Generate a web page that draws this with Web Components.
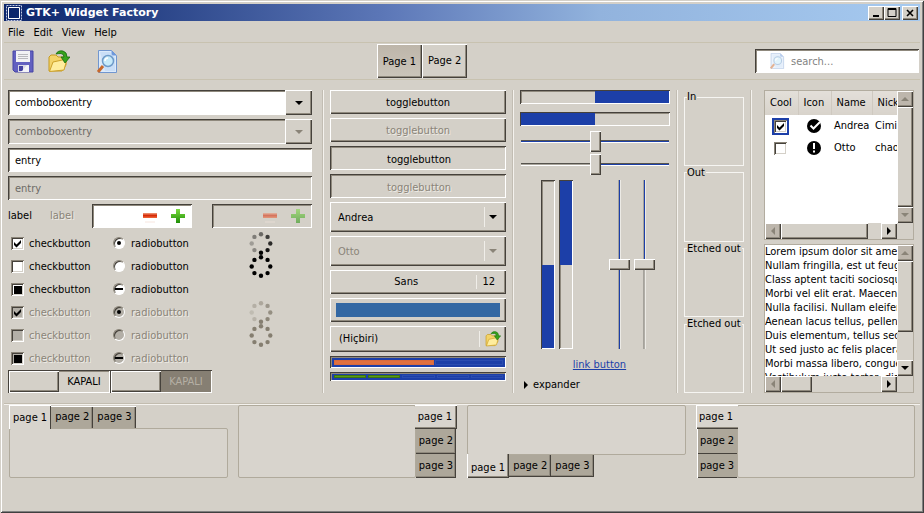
<!DOCTYPE html>
<html lang="tr">
<head>
<meta charset="utf-8">
<title>GTK+ Widget Factory</title>
<style>
    html, body {
        margin: 0;
        background: #d4d0c8;
    }

    body {
        --bg: #d4d0c8;
        --dark: #45413b;
        --shade: #8f897d;
        --blue: #1c3fa8;
        --off: #8a8478;
        --raised: inset 1px 1px #fff, inset -1px -1px #45413b, inset -2px -2px #8f897d;
        --sunken: inset 1px 1px #45413b, inset -1px -1px #fff, inset 2px 2px #8f897d;
        font: 11px/14px Tahoma, "DejaVu Sans Condensed", "DejaVu Sans", sans-serif;
        color: #000;
    }
</style>
</head>
<body>
<gtk-window>
    <gtk-titlebar slot="title">GTK+ Widget Factory</gtk-titlebar>
    <gtk-menubar slot="menu" items="File,Edit,View,Help"></gtk-menubar>
    <gtk-toolbar slot="toolbar"></gtk-toolbar>
    <factory-page></factory-page>
    <gtk-notebook slot="books" side="top"></gtk-notebook>
    <gtk-notebook slot="books" side="right"></gtk-notebook>
    <gtk-notebook slot="books" side="bottom"></gtk-notebook>
    <gtk-notebook slot="books" side="left"></gtk-notebook>
</gtk-window>

<script>
const base = `
    * { box-sizing: border-box; }
    :host { display: block; min-width: 0; box-sizing: border-box; }
    button, input, textarea, select { font: inherit; color: inherit; margin: 0; border: 0; border-radius: 0; padding: 0; background: none; outline: 0; appearance: none; }
    .raised { background: var(--bg); box-shadow: var(--raised); }
    .sunken { background: var(--bg); box-shadow: var(--sunken); }
    .off { color: var(--off); text-shadow: 1px 1px #eeebe5; }
    svg { display: block; flex: none; }
`;

const icons = {
    save: `<svg width="22" height="23" viewBox="0 0 22 23"><path d="M1 1h20v21H3l-2-2z" fill="#6260c0" stroke="#4745a5"/><path d="M4 1h14v11H4z" fill="#f2f2f4"/><path d="M6 4.500h10M6 6.500h10M6 8.500h10" stroke="#b9b9bd"/><path d="M6 15h11v7H6z" fill="#d8d8e6"/><path d="M7 16h4v5H7z" fill="#4341a0"/><path d="M9 22l6-7h2v7z" fill="#fff" opacity=".7"/></svg>`,
    open: `<svg width="22" height="23" viewBox="0 0 22 23"><path d="M1 21V7l2-2h5l2 2h7v4h1v4l-4 6z" fill="#f3d368" stroke="#c59a20"/><path d="M1.500 21.500L5 12l14-3-3 11z" fill="#ffed9d" stroke="#cda22b"/><path d="M8 4q2-4 7-3 4 1 4 6h3l-5 6-4-6h3q0-3-3-3.500-3 0-5 .5z" fill="#36a41c" stroke="#16690d" stroke-width=".8"/></svg>`,
    find: `<svg width="22" height="23" viewBox="0 0 22 23"><path d="M2.500.5h13l5 5v17h-18z" fill="#dceafa" stroke="#7196cf"/><path d="M15.500.5l5 5h-5z" fill="#6d98dc"/><path d="M4 2h10l5 6v13H9z" fill="#bcd5f5" opacity=".6"/><path d="M7 16l-5 6" stroke="#c8682b" stroke-width="3"/><circle cx="12" cy="11" r="5.500" fill="#c7eafa" stroke="#6f9bc9" stroke-width="1.500"/><path d="M9 11q0-3 3-3" stroke="#fff" stroke-width="1.500" fill="none"/></svg>`,
    down: `<svg width="8" height="4" viewBox="0 0 8 4" fill="currentColor"><path d="M0 0h8L4 4z"/></svg>`,
    up: `<svg width="8" height="4" viewBox="0 0 8 4" fill="currentColor"><path d="M0 4h8L4 0z"/></svg>`,
    left: `<svg width="4" height="8" viewBox="0 0 4 8" fill="currentColor"><path d="M4 0v8L0 4z"/></svg>`,
    right: `<svg width="4" height="8" viewBox="0 0 4 8" fill="currentColor"><path d="M0 0v8l4-4z"/></svg>`,
    minus: `<svg width="16" height="16" viewBox="0 0 16 16"><defs><linearGradient id="r" x2="0" y2="1"><stop stop-color="#f0a080"/><stop offset=".5" stop-color="#d62a08"/><stop offset="1" stop-color="#f06a3c"/></linearGradient></defs><path d="M1 5h14v5H1z" fill="url(#r)"/><path d="M3 14h10" stroke="#f7e6df"/></svg>`,
    plus: `<svg width="16" height="16" viewBox="0 0 16 16"><defs><linearGradient id="g" x2="0" y2="1"><stop stop-color="#7ddc3f"/><stop offset="1" stop-color="#1f8f08"/></linearGradient></defs><path d="M6 1h4v5h5v4h-5v5H6v-5H1V6h5z" fill="url(#g)"/></svg>`,
    ok: `<svg width="14" height="14" viewBox="0 0 14 14"><circle cx="7" cy="7" r="7"/><path d="M3.500 6.500L6.500 9.500 13 3" stroke="#fff" stroke-width="2" fill="none"/></svg>`,
    warn: `<svg width="14" height="14" viewBox="0 0 14 14"><circle cx="7" cy="7" r="7"/><path d="M6 2h2v6H6zM6 9.500h2v2H6z" fill="#fff"/></svg>`,
};

class GtkElement extends HTMLElement {
    connectedCallback() {
        if (this.shadowRoot) return;
        const root = this.attachShadow({ mode: 'open' });
        const template = document.createElement('template');
        template.innerHTML = `<style>${base}${this.styles()}</style>${this.markup()}`;
        root.appendChild(template.content.cloneNode(true));
    }

    attr(name, fallback = '') {
        return this.getAttribute(name) || fallback;
    }

    // attribute string for the inner control
    get disabled() {
        return this.hasAttribute('disabled') ? 'disabled' : '';
    }

    styles() { return ''; }

    markup() { return '<slot></slot>'; }
}

class GtkWindow extends GtkElement {
    styles() {
        return `
            :host { display: flex; flex-direction: column; min-height: 100vh; padding: 4px; background: var(--bg);
                box-shadow: inset 1px 1px var(--bg), inset -1px -1px #404040, inset 2px 2px #fff, inset -2px -2px #808080; }
            .books { display: grid; grid-template-columns: repeat(4, minmax(0, 1fr)); gap: 10px; padding: 0 5px; border-top: 1px solid #f4f2ee; }
            .line { border-top: 1px solid #c2bcaf; margin-top: 10px; }
        `;
    }

    markup() {
        return `
            <slot name="title"></slot><slot name="menu"></slot><slot name="toolbar"></slot>
            <slot></slot><div class="line"></div><div class="books"><slot name="books"></slot></div>
        `;
    }
}

class GtkTitlebar extends GtkElement {
    styles() {
        return `
            :host { display: flex; align-items: center; height: 17px; padding: 0 2px; background: linear-gradient(90deg, #0a246a, #5d78b8 42%, #92b3dd 65%, #a6caf0); color: #fff; font-weight: bold; font-family: Verdana, "DejaVu Sans", sans-serif; }
            .title { flex: 1; padding-left: 4px; }
            button { width: 16px; height: 14px; display: grid; place-items: center; color: #000; }
            button:last-child { margin-left: 2px; }
        `;
    }

    markup() {
        return `
            <svg width="16" height="16" viewBox="0 0 16 16" fill="none"><path d="M.5.500h15v15H.5z" stroke="#c5cde6" stroke-dasharray="2 1"/><path d="M2.500 2.500h11v11h-11z" stroke="#fff"/></svg>
            <span class="title"><slot></slot></span>
            <button class="raised" aria-label="Minimize"><svg width="10" height="9"><path d="M2 7h6v2H2z"/></svg></button>
            <button class="raised" aria-label="Maximize"><svg width="10" height="9"><path d="M1 .500h8v8H1zM1 1.500h8" fill="none" stroke="#000"/></svg></button>
            <button class="raised" aria-label="Close"><svg width="8" height="8"><path d="M1 1l6 6M7 1L1 7" stroke="#000" stroke-width="1.600"/></svg></button>
        `;
    }
}

class GtkMenubar extends GtkElement {
    styles() {
        return `
            :host { display: flex; gap: 9px; padding: 5px 4px 2px; border-bottom: 1px solid #c8c2b0; }
        `;
    }

    markup() {
        return this.attr('items').split(',').map((item) => `<button>${item}</button>`).join('');
    }
}

class GtkToolbar extends GtkElement {
    styles() {
        return `
            :host { display: grid; grid-template-columns: 373fr auto 453fr; align-items: center; height: 37px; border-bottom: 1px solid #c8c2b0; }
            .tools { display: flex; gap: 14px; padding-left: 8px; }
            .tools button:last-child { margin-left: 12px; }
            .pages { display: flex; }
            .pages button { height: 34px; padding: 0 6px; }
            .pages .active { background: linear-gradient(#bdb5a9, #cbc5ba); padding-top: 2px; }
            .search { justify-self: end; display: flex; align-items: center; gap: 6px; width: 164px; height: 24px; padding-left: 14px; background: #fff; margin-right: 1px; }
            .search input { flex: 1; min-width: 0; padding-top: 2px; }
            .search svg { width: 16px; height: 16px; opacity: .5; }
            ::placeholder { color: #828282; }
        `;
    }

    markup() {
        return `
            <div class="tools">
                <button aria-label="Save">${icons.save}</button>
                <button aria-label="Open">${icons.open}</button>
                <button aria-label="Find">${icons.find}</button>
            </div>
            <div class="pages"><button class="raised active">Page 1</button><button class="raised">Page 2</button></div>
            <label class="search sunken">${icons.find}<input type="text" aria-label="Search" placeholder="search..."></label>
        `;
    }
}

class GtkEntry extends GtkElement {
    styles() {
        return `
            .box { display: flex; min-height: 24px; background: #fff; }
            :host([combo]) .box { min-height: 25px; }
            :host([disabled]) .box { background: var(--bg); }
            input { flex: 1; min-width: 0; padding: 1px 0 0 7px; }
            input:disabled { color: #6c6a66; }
            button { width: 27px; display: grid; place-items: center; }
            button:disabled { color: var(--off); }
        `;
    }

    markup() {
        const arrow = this.hasAttribute('combo')
            ? `<button class="raised" aria-label="Open list" ${this.disabled}>${icons.down}</button>` : '';
        return `<div class="box sunken"><input type="text" aria-label="${this.attr('value')}" value="${this.attr('value')}" ${this.disabled}>${arrow}</div>`;
    }
}

class GtkSpin extends GtkElement {
    styles() {
        return `
            .box { display: flex; align-items: center; gap: 12px; height: 24px; padding: 0 6px; background: #fff; }
            :host([disabled]) .box { background: var(--bg); }
            input { flex: 1; min-width: 0; }
            :host([disabled]) svg { opacity: .55; }
        `;
    }

    markup() {
        return `
            <div class="box sunken">
                <input type="text" aria-label="Value" ${this.disabled}>
                <button aria-label="Decrease" ${this.disabled}>${icons.minus}</button>
                <button aria-label="Increase" ${this.disabled}>${icons.plus}</button>
            </div>
        `;
    }
}

// checkbutton and radiobutton; state is on, off or mixed
class GtkCheck extends GtkElement {
    styles() {
        return `
            label { display: flex; align-items: center; gap: 5px; height: 23px; }
            .mark { display: grid; width: 13px; height: 13px; flex: none; }
            .mark > * { grid-area: 1 / 1; }
            input { width: 13px; height: 13px; background: #fff; box-shadow: inset 1px 1px var(--off), inset -1px -1px #fff, inset 2px 2px var(--dark), inset -2px -2px var(--bg); }
            input:disabled { background: #b3afa7; }
            input[type=radio] { border-radius: 50%; width: 12px; height: 12px; border: 1px solid; border-color: var(--off) #fff #fff var(--off); box-shadow: inset 1px 1px var(--dark); }
            svg { pointer-events: none; position: relative; }
            :host([bare]) label { height: auto; }
        `;
    }

    markup() {
        const type = this.attr('type', 'checkbox');
        const state = this.attr('state', 'off');
        const marks = {
            'checkbox-on': '<path d="M3 5v3l2.500 2.500L10 6V3L5.500 7.500z"/>',
            'checkbox-mixed': '<path d="M3 3h8v8H3z"/>',
            'radio-on': '<circle cx="6" cy="6" r="2"/>',
            'radio-mixed': '<path d="M2 5h8v2H2z"/>',
        };
        const bare = this.hasAttribute('bare');
        const text = bare ? '' : `<span class="${this.disabled ? 'off' : ''}"><slot></slot></span>`;
        return `
            <label>
                <span class="mark">
                    <input type="${type}" ${bare ? 'aria-label="Cool"' : ''} ${state === 'on' ? 'checked' : ''} ${this.disabled}>
                    <svg width="13" height="13" viewBox="0 0 13 13">${marks[`${type}-${state}`] || ''}</svg>
                </span>${text}
            </label>
        `;
    }
}

class GtkSpinner extends GtkElement {
    markup() {
        const shades = this.hasAttribute('idle') ? [1, 1, 1, 1, 1, 1, 1, 1] : [0.5, 0.7, 0.8, 0.9, 1, 0.35, 0.25, 0.4];
        const fill = this.hasAttribute('disabled') ? '#857e70' : '#000';
        const dots = shades.map((opacity, i) => {
            const angle = i * Math.PI / 4;
            return `<circle cx="${12 + 9.3 * Math.sin(angle)}" cy="${11.5 - 9.3 * Math.cos(angle)}" r="2.200" fill="${fill}" opacity="${opacity}"/>`;
        });
        return `<svg width="24" height="23" role="img" aria-label="Spinner">${dots.join('')}</svg>`;
    }
}

class GtkSwitch extends GtkElement {
    styles() {
        return `
            button { display: grid; grid-template-columns: 1fr 1fr; width: 102px; height: 23px; padding: 1px; }
            .text { display: grid; place-items: center; }
            button:disabled .text { background: #867f73; color: #b5afa4; }
        `;
    }

    markup() {
        return `<button class="sunken" role="switch" aria-checked="false" ${this.disabled}><span class="raised"></span><span class="text"><slot></slot></span></button>`;
    }
}

class GtkButton extends GtkElement {
    styles() {
        return `
            button { display: block; width: 100%; min-height: 24px; padding-top: 2px; }
            button.sunken { padding: 4px 0 0 2px; }
        `;
    }

    markup() {
        const look = this.hasAttribute('pressed') ? 'sunken' : 'raised';
        return `<button class="${look} ${this.disabled && 'off'}" aria-pressed="${look === 'sunken'}" ${this.disabled}><slot></slot></button>`;
    }
}

class GtkCombo extends GtkElement {
    styles() {
        return `
            .box { display: grid; align-items: center; height: 30px; }
            .box > * { grid-area: 1 / 1; }
            select { width: 100%; height: 100%; padding: 2px 0 0 8px; opacity: 1; }
            .arrow { justify-self: end; display: flex; align-items: center; gap: 4px; padding-right: 9px; pointer-events: none; }
            .arrow::before { content: ""; height: 20px; border-left: 1px solid #f0eee9; }
        `;
    }

    markup() {
        const text = this.attr('value');
        return `<div class="box raised ${this.disabled && 'off'}"><select aria-label="${text}" ${this.disabled}><option>${text}</option></select><span class="arrow">${icons.down}</span></div>`;
    }
}

// font, colour and file choosers
class GtkChooser extends GtkElement {
    styles() {
        return `
            button { display: flex; align-items: center; width: 100%; min-height: 24px; padding: 0 6px; }
            .name { flex: 1; }
            .extra { padding: 0 5px; border-left: 1px solid #f0eee9; }
            .color { flex: 1; height: 14px; background: #3468a3; }
            :host([kind=file]) button { min-height: 26px; padding: 0 5px 0 9px; }
            :host([kind=file]) .name { text-align: left; }
            :host([kind=file]) .extra { padding: 0 0 0 5px; }
            svg { width: 16px; height: 16px; }
        `;
    }

    markup() {
        const kind = this.attr('kind');
        if (kind === 'color') return '<button class="raised" aria-label="Choose color"><span class="color"></span></button>';
        const extra = kind === 'file' ? icons.open : this.attr('size');
        return `<button class="raised"><span class="name"><slot></slot></span><span class="extra">${extra}</span></button>`;
    }
}

class GtkLevel extends GtkElement {
    styles() {
        return `
            .level { display: flex; gap: 1px; height: 12px; padding: 4px 3px 3px 4px; background: var(--blue); }
            :host([discrete]) .level { height: 9px; gap: 2px; padding: 3px 3px 3px 4px; }
            i { flex: 1; border: 1px solid #2a4cb0; }
            .bar { flex: 3; background: #e0703f; border-color: #d86a3c; }
            .rest { flex: 2; }
            .full { background: #5a9c12; border-color: #3c7410; }
        `;
    }

    markup() {
        const cells = this.hasAttribute('discrete')
            ? '<i class="full"></i><i class="full"></i><i></i><i></i><i></i>'
            : '<i class="bar"></i><i class="rest"></i>';
        return `<div class="sunken level" role="meter" aria-label="Level" aria-valuenow="3">${cells}</div>`;
    }
}

class GtkProgress extends GtkElement {
    styles() {
        return `
            .bar { display: flex; height: 14px; padding: 1px; }
            .bar::before { content: ""; width: 50%; background: var(--blue); }
            :host([end]) .bar { justify-content: flex-end; }
            :host([vertical]) .bar { flex-direction: column; width: 14px; height: 100%; }
            :host([vertical]) .bar::before { width: auto; height: 50%; }
        `;
    }

    markup() {
        return '<div class="bar sunken" role="progressbar" aria-label="Progress" aria-valuenow="50"></div>';
    }
}

class GtkScale extends GtkElement {
    styles() {
        return `
            input { display: block; width: 100%; height: 21px; padding: 0 1px; }
            input::-webkit-slider-runnable-track { height: 3px; background: linear-gradient(90deg, var(--from, var(--blue)) 50%, var(--blue) 50%); border-top: 1px solid #56534d; border-bottom: 1px solid #fff; }
            input::-webkit-slider-thumb { appearance: none; width: 11px; height: 21px; margin-top: -10px; background: var(--bg); box-shadow: var(--raised); }
            :host([from]) { --from: #aaa69d; }
            :host([vertical]) input { writing-mode: vertical-lr; width: 21px; height: 100%; padding: 0; }
            :host([vertical]) input::-webkit-slider-runnable-track { width: 3px; height: auto; border: 0; border-left: 1px solid #a5a29b; border-right: 1px solid #eceae5; background: linear-gradient(var(--blue) 50%, var(--to, var(--blue)) 50%); }
            :host([vertical]) input::-webkit-slider-thumb { width: 21px; height: 11px; margin: 0 0 0 -10px; }
            :host([to]) { --to: #b0ada6; }
        `;
    }

    markup() {
        return '<input type="range" aria-label="Scale" value="50">';
    }
}

class GtkFrame extends GtkElement {
    styles() {
        return `
            fieldset { height: 100%; margin: 0; padding: 0; border: 1px solid #f6f5f2; min-width: 0; }
            legend { margin-left: 2px; padding: 0 1px 0 0; white-space: nowrap; }
        `;
    }

    markup() {
        return '<fieldset><legend><slot></slot></legend></fieldset>';
    }
}

class GtkScrolled extends GtkElement {
    styles() {
        return `
            :host { border: 1px solid #b2ac9f; display: grid; grid-template: minmax(0, 1fr) 16px / minmax(0, 1fr) 16px; background: var(--bg); min-height: 0; }
            .view { background: #fff; overflow: hidden; min-height: 0; display: grid; }
            .bar, .track { display: flex; min-height: 0; }
            .v, .v .track { flex-direction: column; }
            .track { flex: 1; background: #d6d2ca; }
            button { flex: 0 0 16px; display: grid; place-items: center; }
            button:disabled { color: #8a8478; background: #bdb6ac; }
            .thumb { flex: 0 0 var(--size); }
        `;
    }

    markup() {
        const [v, h] = [this.attr('v'), this.attr('h')];
        const end = v === '100%' ? 'disabled' : '';
        return `
            <div class="view"><slot></slot></div>
            <div class="bar v">
                <button class="raised" aria-label="Up" disabled>${icons.up}</button>
                <div class="track"><span class="thumb raised" style="--size: ${v}"></span></div>
                <button class="raised" aria-label="Down" ${end}>${icons.down}</button>
            </div>
            <div class="bar">
                <button class="raised" aria-label="Left" disabled>${icons.left}</button>
                <div class="track"><span class="thumb raised" style="--size: ${h}"></span></div>
                <button class="raised" aria-label="Right">${icons.right}</button>
            </div>
        `;
    }
}

class GtkTree extends GtkElement {
    styles() {
        return `
            :host { overflow: hidden; }
            table { table-layout: fixed; width: 172px; border-collapse: collapse; }
            th { height: 24px; padding: 0 0 0 5px; text-align: left; font-weight: normal; background: linear-gradient(#e3dfd9, #d8d3cb); border-right: 1px solid #cfc9c0; }
            td { height: 22px; padding: 0 0 0 3px; }
            td:first-child { padding-left: 7px; }
            td:nth-child(2) { padding-left: 9px; }
            .mark { display: inline-block; vertical-align: middle; border: 2px solid #fff; }
            .focus { border-color: var(--blue); }
            .cool, .icon { width: 33px; }
            .name { width: 41px; }
        `;
    }

    markup() {
        return `
            <table>
                <thead><tr><th class="cool">Cool</th><th class="icon">Icon</th><th class="name">Name</th><th>Nick</th></tr></thead>
                <tbody>
                    <tr><td><gtk-check class="mark focus" bare state="on"></gtk-check></td><td>${icons.ok}</td><td>Andrea</td><td>Cimi</td></tr>
                    <tr><td><gtk-check class="mark" bare></gtk-check></td><td>${icons.warn}</td><td>Otto</td><td>chaotic</td></tr>
                </tbody>
            </table>
        `;
    }
}

class GtkTextview extends GtkElement {
    styles() {
        return `
            :host { display: grid; min-height: 0; }
            textarea { width: 100%; height: 100%; min-height: 0; resize: none; overflow: hidden; white-space: pre; display: block; }
        `;
    }

    markup() {
        return `<textarea aria-label="Text" wrap="off">Lorem ipsum dolor sit amet,
Nullam fringilla, est ut feugiat
Class aptent taciti sociosqu
Morbi vel elit erat. Maecenas
Nulla facilisi. Nullam eleifend
Aenean lacus tellus, pellentesque
Duis elementum, tellus sed tristique
Ut sed justo ac felis placerat
Morbi massa libero, congue
Vestibulum justo tortor, diam</textarea>`;
    }
}

class GtkNotebook extends GtkElement {
    styles() {
        return `
            :host { display: flex; height: 73px; }
            :host([side=top]) { flex-direction: column; }
            :host([side=right]) { flex-direction: row-reverse; }
            :host([side=bottom]) { flex-direction: column-reverse; }
            .pane { flex: 1; background: #d8d4cd; border: 1px solid #b0aa9c; border-radius: 2px; }
            .tabs { display: flex; flex: none; }
            button { height: 22px; padding: 0 4px; background: #ada79a; white-space: nowrap; }
            button:first-child { background: #d8d4cd; position: relative; }
            :host([side=top]) .tabs { align-items: flex-end; }
            :host([side=top]) button { box-shadow: inset 0 1px #fff, inset -1px 0 var(--dark), inset -2px 0 var(--shade); }
            :host([side=top]) button:first-child { height: 24px; padding-top: 2px; margin-bottom: -1px; box-shadow: inset 1px 1px #fff, inset -1px 0 var(--dark); }
            :host([side=bottom]) .tabs { align-items: flex-start; }
            :host([side=bottom]) button { box-shadow: inset -1px -1px var(--dark), inset -2px -2px var(--shade); }
            :host([side=bottom]) button:first-child { height: 24px; padding-top: 3px; margin-top: -1px; box-shadow: inset 1px 0 #fff, inset -1px -1px var(--dark), inset -2px -2px var(--shade); }
            :host([side=left]) .tabs, :host([side=right]) .tabs { flex-direction: column; }
            :host([side=left]) button, :host([side=right]) button { flex: 1; padding: 0 3px; }
            :host([side=left]) button { box-shadow: inset 1px 0 #fff, inset 0 -1px var(--dark); margin-left: 1px; }
            :host([side=left]) button:first-child { margin: 0 -1px 0 0; padding-right: 5px; box-shadow: inset 1px 1px #fff, inset 0 -1px var(--dark), inset 0 -2px var(--shade); }
            :host([side=right]) button { box-shadow: inset -1px -1px var(--dark), inset -2px -2px var(--shade); margin-right: 1px; }
            :host([side=right]) button:first-child { margin: 0 0 0 -1px; padding-right: 5px; box-shadow: inset 0 1px #fff, inset -1px -1px var(--dark), inset -2px -2px var(--shade); }
        `;
    }

    markup() {
        return '<div class="tabs"><button>page 1</button><button>page 2</button><button>page 3</button></div><div class="pane"></div>';
    }
}

class FactoryPage extends GtkElement {
    styles() {
        return `
            :host { display: grid; grid-template-columns: minmax(0, 308fr) 2px minmax(0, 176fr) 2px minmax(0, 150fr) 2px minmax(0, 60fr) 2px minmax(0, 156fr); gap: 6px; padding: 10px 6px 0 4px; }
            .sep { border-left: 1px solid #c2bdb3; border-right: 1px solid #f4f2ee; }
            .col { display: flex; flex-direction: column; gap: 4px; }
            .first { padding-right: 4px; }
            .spins { display: flex; align-items: center; justify-content: space-between; }
            .spins span { width: 22px; }
            .spins gtk-spin { width: 100px; }
            .checks { display: grid; grid-template-columns: 102px 1fr 63px; padding-left: 3px; }
            .switches { display: flex; }
            .meters { display: flex; flex-direction: column; gap: 8px; padding-bottom: 1px; }
            .scales { display: flex; flex-direction: column; gap: 2px; }
            .bars { display: flex; justify-content: center; gap: 4px; height: 169px; margin-top: 1px; padding-left: 6px; }
            .bars :nth-child(3) { margin-left: 32px; }
            a { align-self: center; color: var(--blue); margin: 5px 0 2px; padding-left: 9px; }
            .expander { display: flex; align-items: center; gap: 5px; padding-left: 4px; }
            .frames { display: grid; grid-auto-rows: 1fr; }
            .views { display: grid; grid-auto-rows: minmax(0, 1fr); gap: 4px; padding-left: 6px; height: 303px; }
        `;
    }

    markup() {
        const states = ['on', 'off', 'mixed'];
        const rows = ['', 'disabled'].map((disabled) => `
            <div class="checks">
                <div>${states.map((s) => `<gtk-check state="${s}" ${disabled}>checkbutton</gtk-check>`).join('')}</div>
                <div>${states.map((s) => `<gtk-check type="radio" state="${s}" ${disabled}>radiobutton</gtk-check>`).join('')}</div>
                <div><gtk-spinner ${disabled}></gtk-spinner><gtk-spinner idle ${disabled}></gtk-spinner></div>
            </div>
        `).join('');
        return `
            <div class="col first">
                <gtk-entry combo value="comboboxentry"></gtk-entry>
                <gtk-entry combo disabled value="comboboxentry"></gtk-entry>
                <gtk-entry value="entry"></gtk-entry>
                <gtk-entry disabled value="entry"></gtk-entry>
                <div class="spins"><span>label</span><span class="off">label</span><gtk-spin></gtk-spin><gtk-spin disabled></gtk-spin></div>
                <div>${rows}<div class="switches"><gtk-switch>KAPALI</gtk-switch><gtk-switch disabled>KAPALI</gtk-switch></div></div>
            </div>
            <div class="sep"></div>
            <div class="col">
                <gtk-button>togglebutton</gtk-button>
                <gtk-button disabled>togglebutton</gtk-button>
                <gtk-button pressed>togglebutton</gtk-button>
                <gtk-button pressed disabled>togglebutton</gtk-button>
                <gtk-combo value="Andrea"></gtk-combo>
                <gtk-combo value="Otto" disabled></gtk-combo>
                <gtk-chooser kind="font" size="12">Sans</gtk-chooser>
                <gtk-chooser kind="color"></gtk-chooser>
                <gtk-chooser kind="file">(Hiçbiri)</gtk-chooser>
                <gtk-level></gtk-level>
                <gtk-level discrete></gtk-level>
            </div>
            <div class="sep"></div>
            <div class="col">
                <div class="meters"><gtk-progress end></gtk-progress><gtk-progress></gtk-progress></div>
                <div class="scales"><gtk-scale></gtk-scale><gtk-scale from></gtk-scale></div>
                <div class="bars">
                    <gtk-progress vertical end></gtk-progress><gtk-progress vertical></gtk-progress>
                    <gtk-scale vertical></gtk-scale><gtk-scale vertical to></gtk-scale>
                </div>
                <a href="#">link button</a>
                <button class="expander">${icons.right}expander</button>
            </div>
            <div class="sep"></div>
            <div class="frames">
                <gtk-frame>In</gtk-frame><gtk-frame>Out</gtk-frame><gtk-frame>Etched out</gtk-frame><gtk-frame>Etched out</gtk-frame>
            </div>
            <div class="sep"></div>
            <div class="views">
                <gtk-scrolled v="100%" h="87%"><gtk-tree></gtk-tree></gtk-scrolled>
                <gtk-scrolled v="72%" h="31%"><gtk-textview></gtk-textview></gtk-scrolled>
            </div>
        `;
    }
}

customElements.define('gtk-window', GtkWindow);
customElements.define('gtk-titlebar', GtkTitlebar);
customElements.define('gtk-menubar', GtkMenubar);
customElements.define('gtk-toolbar', GtkToolbar);
customElements.define('gtk-entry', GtkEntry);
customElements.define('gtk-spin', GtkSpin);
customElements.define('gtk-check', GtkCheck);
customElements.define('gtk-spinner', GtkSpinner);
customElements.define('gtk-switch', GtkSwitch);
customElements.define('gtk-button', GtkButton);
customElements.define('gtk-combo', GtkCombo);
customElements.define('gtk-chooser', GtkChooser);
customElements.define('gtk-level', GtkLevel);
customElements.define('gtk-progress', GtkProgress);
customElements.define('gtk-scale', GtkScale);
customElements.define('gtk-frame', GtkFrame);
customElements.define('gtk-scrolled', GtkScrolled);
customElements.define('gtk-tree', GtkTree);
customElements.define('gtk-textview', GtkTextview);
customElements.define('gtk-notebook', GtkNotebook);
customElements.define('factory-page', FactoryPage);
</script>
</body>
</html>
